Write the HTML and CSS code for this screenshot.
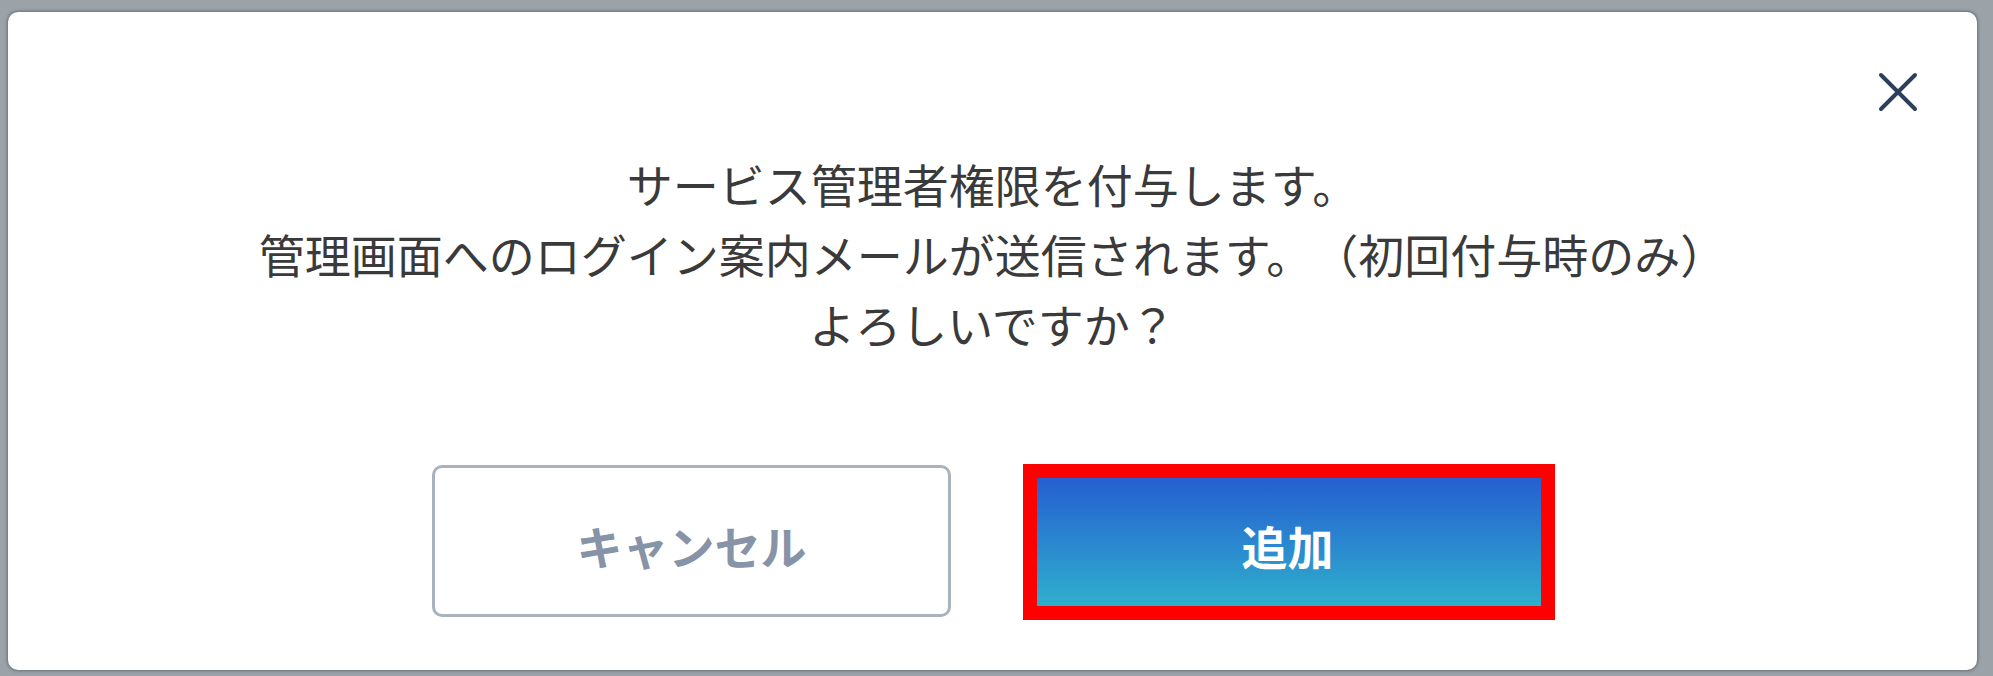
FILE: index.html
```html
<!DOCTYPE html>
<html lang="ja">
<head>
<meta charset="utf-8">
<title>サービス管理者権限</title>
<link rel="stylesheet" href="styles.css">
</head>
<body>
<div class="backdrop">
  <div class="dialog">
    <button class="close" aria-label="閉じる">
      <svg width="40" height="40" viewBox="0 0 40 40"><path d="M3 3 L37 37 M37 3 L3 37" stroke="#2c3f5d" stroke-width="4" stroke-linecap="round" fill="none"/></svg>
    </button>
    <div class="message">
      <p class="line">サービス管理者権限を付与します。</p>
      <p class="line">管理画面へのログイン案内メールが送信されます。　（初回付与時のみ）</p>
      <p class="line">よろしいですか？</p>
    </div>
    <div class="actions">
      <button class="btn btn-cancel">キャンセル</button>
      <div class="btn-wrap">
        <button class="btn btn-primary">追加</button>
        <span class="highlight"></span>
      </div>
    </div>
  </div>
</div>
</body>
</html>
```
FILE: styles.css
```css
html, body {
  margin: 0;
  padding: 0;
}
body {
  width: 1993px;
  height: 676px;
  background: #9ba3a9;
  font-family: "Noto Sans CJK JP", "Noto Sans", sans-serif;
  overflow: hidden;
}
.backdrop {
  box-sizing: border-box;
  height: 676px;
  padding: 12px 16px 6px 8px;
  display: flex;
}
.dialog {
  position: relative;
  flex: 1;
  background: #ffffff;
  border-radius: 10px;
  box-shadow: 0 0 3px 1px rgba(60, 72, 80, 0.55);
  display: flex;
  flex-direction: column;
  align-items: center;
}
.close {
  position: absolute;
  top: 60px;
  right: 59px;
  width: 40px;
  height: 40px;
  padding: 0;
  border: 0;
  background: transparent;
  display: flex;
}
.message {
  margin-top: 136px;
  text-align: center;
  color: #3a3a3a;
  font-size: 46px;
  line-height: 70px;
}
.line {
  margin: 0;
}
.actions {
  margin-top: 107px;
  display: flex;
  gap: 77px;
  padding-right: 6px;
}
.btn {
  box-sizing: border-box;
  width: 519px;
  height: 152px;
  border-radius: 10px;
  font-family: "Noto Sans CJK JP", "Noto Sans", sans-serif;
  font-size: 46px;
  font-weight: 700;
  padding: 8px 0 0 0;
  cursor: pointer;
}
.btn-cancel {
  background: #ffffff;
  border: 3px solid #a9b2be;
  color: #8793a6;
}
.btn-wrap {
  position: relative;
}
.btn-primary {
  border: 0;
  color: #ffffff;
  background: linear-gradient(180deg, #2457cf 0%, #2a86cf 50%, #30b6cc 100%);
}
.highlight {
  position: absolute;
  left: -5px;
  top: -1px;
  width: 532px;
  height: 156px;
  box-sizing: border-box;
  border: 14px solid #ff0000;
  pointer-events: none;
}
```
